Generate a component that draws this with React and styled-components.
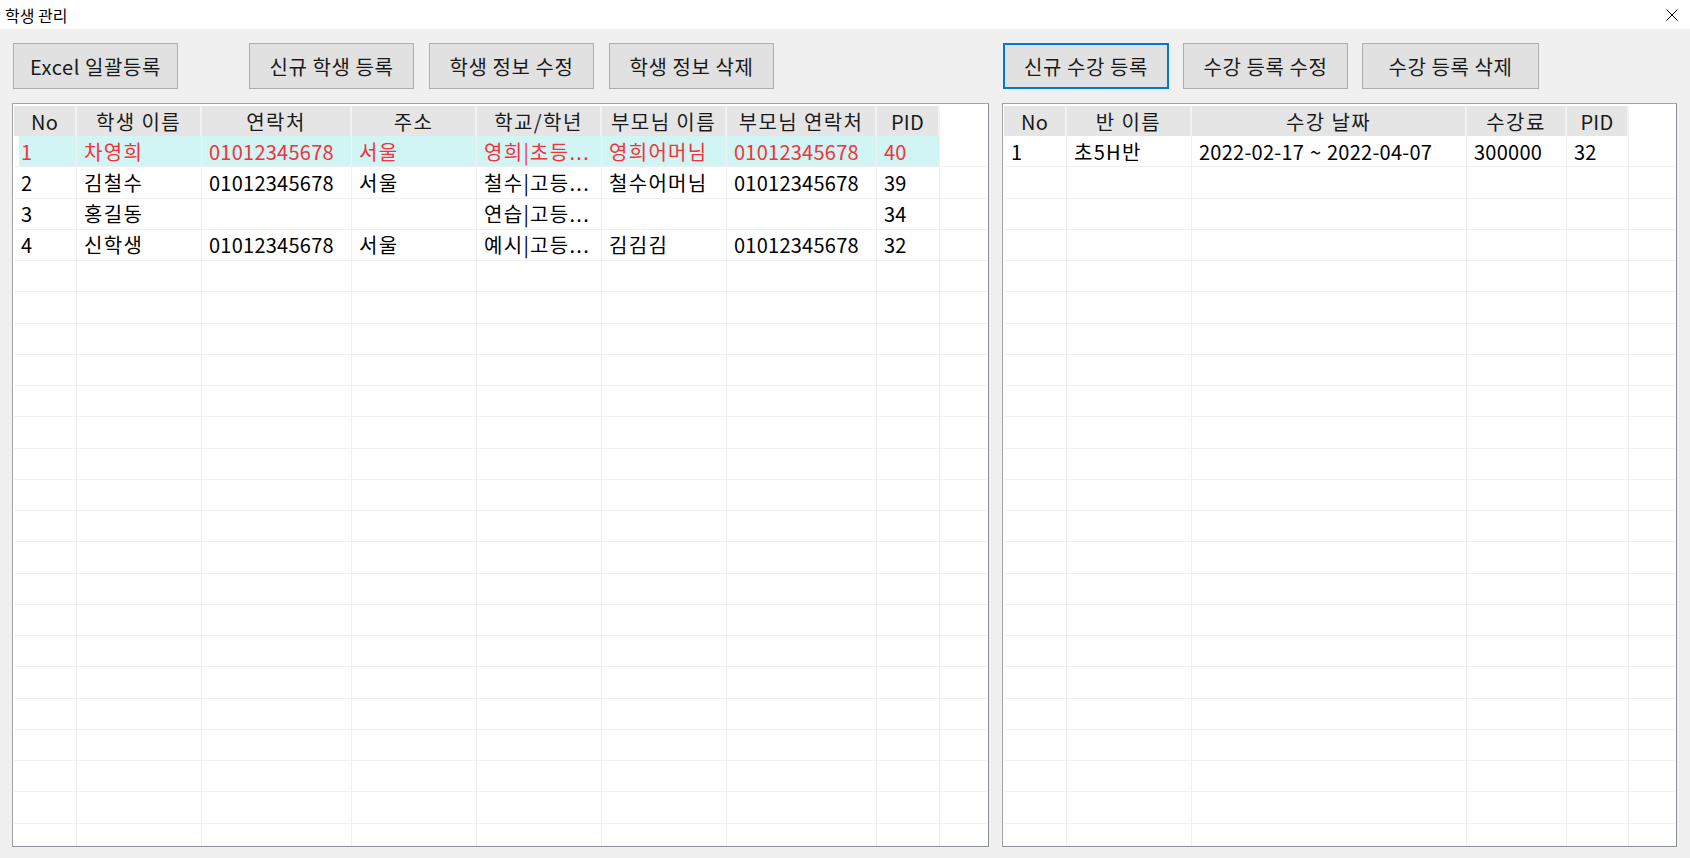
import React from 'react';
import styled, { createGlobalStyle } from 'styled-components';

const studentColumns = [
  { title: 'No', width: 63 },
  { title: '학생 이름', width: 125 },
  { title: '연락처', width: 150 },
  { title: '주소', width: 125 },
  { title: '학교/학년', width: 125 },
  { title: '부모님 이름', width: 125 },
  { title: '부모님 연락처', width: 150 },
  { title: 'PID', width: 63 },
];

const students = [
  ['1', '차영희', '01012345678', '서울', '영희|초등...', '영희어머님', '01012345678', '40'],
  ['2', '김철수', '01012345678', '서울', '철수|고등...', '철수어머님', '01012345678', '39'],
  ['3', '홍길동', '', '', '연습|고등...', '', '', '34'],
  ['4', '신학생', '01012345678', '서울', '예시|고등...', '김김김', '01012345678', '32'],
];

const courseColumns = [
  { title: 'No', width: 63 },
  { title: '반 이름', width: 125 },
  { title: '수강 날짜', width: 275 },
  { title: '수강료', width: 100 },
  { title: 'PID', width: 62 },
];

const courses = [['1', '초5H반', '2022-02-17 ~ 2022-04-07', '300000', '32']];

const ROW_COUNT = 24;
const hasHangul = (text) => /[가-힣]/.test(text);

const ListTable = ({ columns, rows, selected }) => {
  const template = columns.map((c) => `${c.width}px`).join(' ') + ' 1fr';
  const filled = [...rows];
  while (filled.length < ROW_COUNT) filled.push(columns.map(() => ''));

  return (
    <ListView>
      <HeaderRow $cols={template}>
        {columns.map((c) => (
          <HeaderCell key={c.title} $hangul={hasHangul(c.title)}>{c.title}</HeaderCell>
        ))}
        <HeaderFiller />
      </HeaderRow>
      {filled.map((row, i) => (
        <Row key={i} $cols={template} $selected={i === selected}>
          {row.map((value, j) => (
            <Cell key={j} $first={j === 0} $hangul={hasHangul(value)}>{value}</Cell>
          ))}
          <FillerCell />
        </Row>
      ))}
    </ListView>
  );
};

const App = () => {
  return (
    <Window>
      <GlobalStyle />
      <TitleBar>
        <TitleText>학생 관리</TitleText>
        <CloseButton>
          <svg width="12" height="12" viewBox="0 0 12 12">
            <path d="M0.5 0.5 L11.5 11.5 M11.5 0.5 L0.5 11.5" stroke="#000" strokeWidth="1" />
          </svg>
        </CloseButton>
      </TitleBar>

      <Content>
        <Panel>
          <Toolbar $gap={15}>
            <Button $width={165} $extra={56}>Excel 일괄등록</Button>
            <Button $width={165}>신규 학생 등록</Button>
            <Button $width={165}>학생 정보 수정</Button>
            <Button $width={165}>학생 정보 삭제</Button>
          </Toolbar>
          <ListTable columns={studentColumns} rows={students} selected={0} />
        </Panel>

        <Panel>
          <Toolbar $gap={14}>
            <Button $width={166} $focused>신규 수강 등록</Button>
            <Button $width={165}>수강 등록 수정</Button>
            <Button $width={177}>수강 등록 삭제</Button>
          </Toolbar>
          <ListTable columns={courseColumns} rows={courses} selected={-1} />
        </Panel>
      </Content>
    </Window>
  );
};

// Styled Components
const GlobalStyle = createGlobalStyle`
  html, body {
    margin: 0;
    padding: 0;
  }

  body {
    font-family: "Noto Sans CJK KR", "Noto Sans", sans-serif;
    background-color: #f0f0f0;
    overflow: hidden;
  }
`;

const Window = styled.div`
  display: flex;
  flex-direction: column;
  width: 1690px;
  height: 858px;
  background-color: #f0f0f0;
`;

const TitleBar = styled.div`
  display: flex;
  align-items: center;
  justify-content: space-between;
  height: 29px;
  padding: 0 12px 0 5px;
  background-color: #ffffff;
  box-sizing: border-box;
`;

const TitleText = styled.span`
  font-size: 16px;
  color: #000;
`;

const CloseButton = styled.span`
  display: flex;
  align-items: center;
`;

const Content = styled.div`
  flex: 1;
  display: grid;
  grid-template-columns: 977px 675px;
  column-gap: 13px;
  padding: 14px 13px 11px 12px;
  min-height: 0;
`;

const Panel = styled.div`
  display: flex;
  flex-direction: column;
  gap: 14px;
  min-height: 0;
`;

const Toolbar = styled.div`
  display: flex;
  gap: ${(p) => p.$gap}px;
  height: 46px;
  padding-left: 1px;
`;

const Button = styled.button`
  width: ${(p) => p.$width}px;
  height: 46px;
  margin-right: ${(p) => p.$extra || 0}px;
  padding: 0;
  font-family: inherit;
  font-size: 20px;
  letter-spacing: 0.6px;
  color: #1a1a1a;
  background-color: #e1e1e1;
  border: ${(p) => (p.$focused ? '2px solid #0078d7' : '1px solid #adadad')};
  box-sizing: border-box;
  cursor: pointer;
`;

const ListView = styled.div`
  flex: 1;
  min-height: 0;
  overflow: hidden;
  padding: 2px 1px 0 1px;
  background-color: #ffffff;
  border: 1px solid #8d929a;
  border-top-color: #a3a3a3;
  border-left-color: #a3a3a3;
`;

const HeaderRow = styled.div`
  display: grid;
  grid-template-columns: ${(p) => p.$cols};
  height: 30px;
`;

const HeaderCell = styled.div`
  display: flex;
  align-items: center;
  justify-content: center;
  font-size: 20px;
  letter-spacing: ${(p) => (p.$hangul ? '1.4px' : '0.3px')};
  color: #1a1a1a;
  background-color: #e5e5e5;
  border-right: 2px solid #f2f2f2;
  white-space: nowrap;
  overflow: hidden;
`;

const HeaderFiller = styled.div`
  background-color: #ffffff;
`;

const Row = styled.div`
  display: grid;
  grid-template-columns: ${(p) => p.$cols};
  height: 31.25px;
  color: ${(p) => (p.$selected ? '#f5323a' : '#000')};
  --row-bg: ${(p) => (p.$selected ? '#d1f4f4' : '#ffffff')};
`;

const Cell = styled.div`
  display: flex;
  align-items: center;
  padding-left: 7px;
  font-size: 20px;
  letter-spacing: ${(p) => (p.$hangul ? '1.3px' : '0.25px')};
  word-spacing: 1px;
  white-space: nowrap;
  overflow: hidden;
  background: ${(p) =>
    p.$first
      ? 'linear-gradient(to right, #ffffff 5px, var(--row-bg) 5px)'
      : 'var(--row-bg)'};
  border-right: 1px solid #f0f0f0;
  border-bottom: 1px solid #f0f0f0;
  box-sizing: border-box;
`;

const FillerCell = styled.div`
  border-bottom: 1px solid #f0f0f0;
`;

export default App;
